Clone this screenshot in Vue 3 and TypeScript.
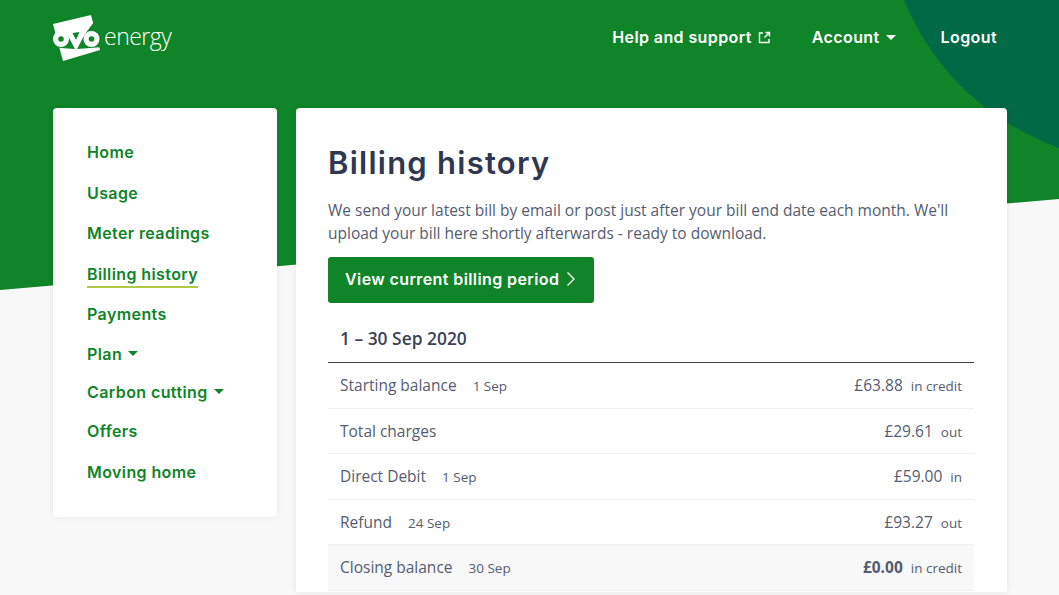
<script setup lang="ts">
interface Row { label: string; date?: string; amount: string; dir: string; closing?: boolean }
const nav: { label: string; active?: boolean; caret?: boolean }[] = [
  { label: 'Home' },
  { label: 'Usage' },
  { label: 'Meter readings' },
  { label: 'Billing history', active: true },
  { label: 'Payments' },
  { label: 'Plan', caret: true },
  { label: 'Carbon cutting', caret: true },
  { label: 'Offers' },
  { label: 'Moving home' },
]
const rows: Row[] = [
  { label: 'Starting balance', date: '1 Sep', amount: '£63.88', dir: 'in credit' },
  { label: 'Total charges', amount: '£29.61', dir: 'out' },
  { label: 'Direct Debit', date: '1 Sep', amount: '£59.00', dir: 'in' },
  { label: 'Refund', date: '24 Sep', amount: '£93.27', dir: 'out' },
  { label: 'Closing balance', date: '30 Sep', amount: '£0.00', dir: 'in credit', closing: true },
]
</script>

<template>
  <div class="page">
    <svg class="backdrop" width="1059" height="595" viewBox="0 0 1059 595" aria-hidden="true">
      <polygon points="0,0 1059,0 1059,199 0,290" fill="#108428" />
      <path d="M904,0 C940,85 1000,125 1059,148 L1059,0 Z" fill="#006945" />
    </svg>
    <header class="topbar">
      <div class="logo">
        <svg class="logo-mark" width="50" height="50" viewBox="0 0 50 50" aria-hidden="true">
          <polygon points="0,10 38,1 47,36 10,47" fill="#fff" />
          <path d="M14,20 L22,35 L8,34 L0,32 Z" fill="#108428" />
          <path d="M32,20 L24,35 L37,34 L50,33 L50,20 L41,8 Z" fill="#108428" />
          <path d="M19.5,19 L26.5,18 L23,26 Z" fill="#108428" />
          <circle cx="8" cy="25" r="8" fill="#fff" />
          <circle cx="8" cy="25" r="2.8" fill="#108428" />
          <circle cx="38.5" cy="25" r="8" fill="#fff" />
          <circle cx="38.5" cy="25" r="2.8" fill="#108428" />
        </svg>
        <span class="logo-word">energy</span>
      </div>
      <nav class="topnav">
        <a class="help">Help and support
          <svg width="13" height="13" viewBox="0 0 13 13" fill="none" stroke="#fff" stroke-width="1.4" aria-hidden="true">
            <path d="M5 2H1.5V11.5H11V8" />
            <path d="M7.5 1.5H11.5V5.5M11.5 1.5L6.5 6.5" />
          </svg>
        </a>
        <a class="account">Account <span class="caret white"></span></a>
        <a class="logout">Logout</a>
      </nav>
    </header>
    <div class="layout">
      <aside class="side">
        <a v-for="n in nav" :key="n.label" class="side-link" :class="{ active: n.active, tight: n.caret }">
          <span class="side-label">{{ n.label }}</span>
          <span v-if="n.caret" class="caret green"></span>
        </a>
      </aside>
      <main class="card">
        <h1>Billing history</h1>
        <p class="intro">We send your latest bill by email or post just after your bill end date each month. We'll upload your bill here shortly afterwards - ready to download.</p>
        <button class="cta" type="button">
          View current billing period
          <svg width="10" height="16" viewBox="0 0 10 16" fill="none" stroke="#fff" stroke-width="1.4" aria-hidden="true">
            <path d="M1.5 1.5L8 8L1.5 14.5" />
          </svg>
        </button>
        <h2 class="period">1 – 30 Sep 2020</h2>
        <div v-for="r in rows" :key="r.label" class="row" :class="{ closing: r.closing }">
          <span class="left">
            <span class="label">{{ r.label }}</span>
            <span v-if="r.date" class="date">{{ r.date }}</span>
          </span>
          <span class="right">
            <span class="amount">{{ r.amount }}</span>
            <span class="dir">{{ r.dir }}</span>
          </span>
        </div>
      </main>
    </div>
  </div>
</template>

<style scoped>
.page {
  position: relative;
  width: 1059px;
  height: 595px;
  overflow: hidden;
  background: #f8f8f8;
  font-family: "Open Sans", "Noto Sans", sans-serif;
  color: #555c70;
}
.backdrop { position: absolute; left: 0; top: 0; }
.topbar {
  position: relative;
  height: 108px;
  padding: 0 62px 0 53px;
  box-sizing: border-box;
  display: flex;
  justify-content: space-between;
  align-items: flex-start;
}
.logo { display: flex; align-items: flex-start; margin-top: 14px; }
.logo-mark { overflow: visible; }
.logo-word {
  color: #fff;
  font: 300 23px/1 "Open Sans", sans-serif;
  margin: 11px 0 0 1px;
  letter-spacing: -0.5px;
}
.topnav {
  display: flex;
  align-items: center;
  height: 74px;
  font: 600 16px/1 Inter, sans-serif;
  letter-spacing: 0.4px;
  color: #fff;
}
.help { display: flex; align-items: center; gap: 6px; margin-right: 41px; }
.account { display: flex; align-items: center; gap: 6px; margin-right: 45px; }
.caret {
  display: inline-block;
  width: 0;
  height: 0;
  border-left: 5px solid transparent;
  border-right: 5px solid transparent;
  border-top: 5px solid #fff;
}
.caret.green { border-top-color: #108428; margin-left: 6px; }
.layout {
  position: relative;
  display: flex;
  gap: 19px;
  padding-left: 53px;
  align-items: flex-start;
}
.side {
  width: 224px;
  height: 409px;
  box-sizing: border-box;
  padding: 24px 0 0 34px;
  background: #fff;
  border-radius: 4px;
  box-shadow: 0 0 6px rgba(0, 0, 0, 0.08);
  display: flex;
  flex-direction: column;
  align-items: flex-start;
}
.side-link {
  display: flex;
  align-items: center;
  height: 40.5px;
  font: 600 16px/1 Inter, sans-serif;
  letter-spacing: 0.4px;
  color: #108428;
  flex: none;
}
.side-link.tight { height: 38.3px; }
.side-link.active .side-label {
  border-bottom: 2px solid #afcb46;
  padding-bottom: 4px;
  margin-top: 6px;
}
.card {
  width: 711px;
  height: 484px;
  box-sizing: border-box;
  padding: 32px 33px 0 32px;
  background: #fff;
  border-radius: 4px 4px 0 0;
  box-shadow: 0 0 6px rgba(0, 0, 0, 0.08);
}
h1 {
  margin: 0 0 13px;
  font: 600 31px/46px Inter, sans-serif;
  letter-spacing: 1.25px;
  color: #2f3850;
}
.intro {
  margin: 0 0 12px;
  font-size: 15.5px;
  line-height: 23px;
}
.cta {
  display: flex;
  align-items: center;
  gap: 7px;
  height: 46px;
  width: 266px;
  padding: 0 0 2px 17px;
  border: 0;
  border-radius: 3px;
  background: #108428;
  color: #fff;
  font: 600 16px/1 Inter, sans-serif;
  letter-spacing: 0.4px;
}
.period {
  margin: 0;
  height: 60px;
  box-sizing: border-box;
  padding: 12px 12px 0;
  display: flex;
  align-items: center;
  font: 600 17.4px/1 "Open Sans", sans-serif;
  color: #3c4356;
  border-bottom: 1px solid #3c4356;
}
.row {
  display: flex;
  justify-content: space-between;
  align-items: center;
  height: 45.5px;
  box-sizing: border-box;
  padding: 0 12px;
  border-bottom: 1px solid #f0f0f0;
}
.row.closing { background: #f8f8f8; }
.left { display: flex; align-items: baseline; gap: 16px; }
.label { font-size: 15.5px; }
.date, .dir { font-size: 13.5px; }
.right { display: flex; align-items: baseline; gap: 8px; }
.amount { font-size: 15.5px; }
.closing .amount { font-weight: 700; }
</style>

<style>
body { margin: 0; }
</style>
